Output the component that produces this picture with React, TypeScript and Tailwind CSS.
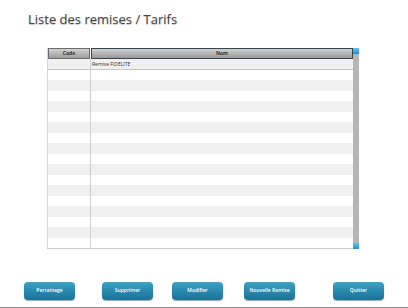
import React from "react";

const rows = Array.from({ length: 18 });

function Btn({ label, className }: { label: string; className?: string }) {
  return (
    <div
      className={
        "w-[51px] h-[18px] rounded-[4px] flex items-center justify-center text-white text-[5px] font-semibold shadow-[0_1px_1px_rgba(0,0,0,0.35)] bg-gradient-to-b from-[#3aa2c8] to-[#1a7198] " +
        (className ?? "")
      }
    >
      {label}
    </div>
  );
}

export default function App() {
  return (
    <div
      className="w-[408px] h-[308px] bg-white relative overflow-hidden"
      style={{ fontFamily: "'Open Sans', 'DejaVu Sans', sans-serif" }}
    >
      <div className="pt-[10px] pl-[28px] h-[48px]">
        <div className="text-[13px] text-[#444] leading-[19px] [text-shadow:0_1px_1px_rgba(0,0,0,0.25)]">
          Liste des remises / Tarifs
        </div>
      </div>
      <div className="ml-[47px] flex">
        <div className="w-[306px] border-b border-[#cfcfcf]">
          <div className="flex h-[11px] border-l border-[#d8d8d8]">
            <div className="w-[42px] h-[11px] bg-gradient-to-b from-[#d2d2d2] to-[#9d9d9d] border border-[#6b6b6b] flex items-center justify-center text-[5px] font-bold text-[#333]">
              Code
            </div>
            <div className="ml-[1px] flex-1 h-[11px] bg-gradient-to-b from-[#d0d0d0] to-[#9a9a9a] border border-[#36474f] flex items-center justify-center text-[5px] font-bold text-[#333]">
              Nom
            </div>
          </div>
          {rows.map((_, i) => (
            <div
              key={i}
              className={
                "flex h-[10.5px] border-l border-[#d8d8d8] " +
                (i % 2 === 0 ? "bg-[#f0f0f0]" : "bg-white") +
                (i === 0 ? " border-b border-b-[#c8c8c8]" : "")
              }
            >
              <div className="w-[43px] border-r border-[#cfcfcf]" />
              <div className="flex-1 pl-[1px] text-[5px] text-[#333] leading-[10px]">
                {i === 0 ? "Remise FIDELITE" : ""}
              </div>
            </div>
          ))}
        </div>
        <div className="w-[6px] bg-[#b5b5b5] flex flex-col justify-between">
          <div className="h-[6px] bg-gradient-to-b from-[#5cc6f0] to-[#1f8ec4]" />
          <div className="h-[6px] bg-gradient-to-b from-[#5cc6f0] to-[#1f8ec4]" />
        </div>
      </div>
      <div className="absolute left-0 right-0 top-[282px] flex">
        <Btn label="Perrainage" className="ml-[24px]" />
        <Btn label="Supprimer" className="ml-[27px]" />
        <Btn label="Modifier" className="ml-[19px]" />
        <Btn label="Nouvelle Remise" className="ml-[21px]" />
        <Btn label="Quitter" className="ml-[38px]" />
      </div>
      <div className="absolute left-0 right-0 bottom-0 h-[1px] bg-[#8a8a8a]" />
    </div>
  );
}
